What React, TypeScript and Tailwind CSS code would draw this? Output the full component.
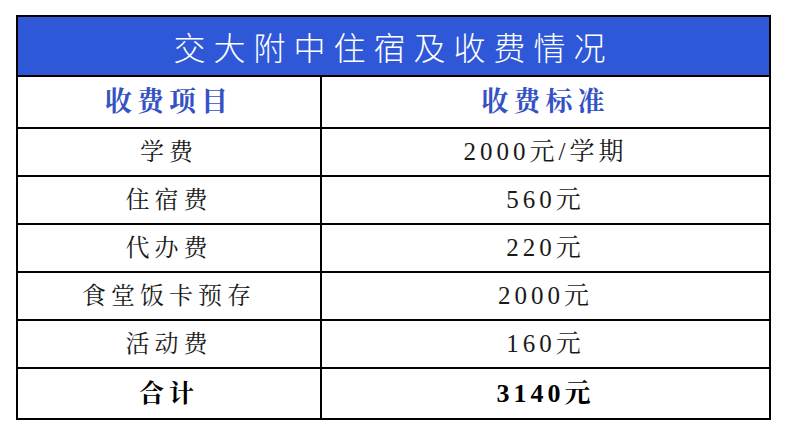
import React from 'react';

const rows: [string, string][] = [
  ['学费', '2000元/学期'],
  ['住宿费', '560元'],
  ['代办费', '220元'],
  ['食堂饭卡预存', '2000元'],
  ['活动费', '160元'],
];

const font = { fontFamily: '"Liberation Serif", "Noto Serif CJK SC", "Noto Sans CJK SC", serif' };

export default function App() {
  return (
    <div className="w-[786px] h-[436px] bg-white pt-[15px] pl-[16px]" style={font}>
      <table className="w-[755px] border-collapse border-2 border-black text-black">
        <tbody>
          <tr className="h-[60px]">
            <td
              colSpan={2}
              className="bg-[#2f58d8] text-white text-center text-[32px] tracking-[8px] border-2 border-black"
              style={{ fontFamily: '"Noto Sans CJK SC", sans-serif', fontWeight: 300 }}
            >
              交大附中住宿及收费情况
            </td>
          </tr>
          <tr className="h-[52px]">
            <td className="w-[304px] border-2 border-black text-center text-[27px] tracking-[5px] font-bold text-[#3452c4]">
              收费项目
            </td>
            <td className="border-2 border-black text-center text-[27px] tracking-[5px] font-bold text-[#3452c4]">
              收费标准
            </td>
          </tr>
          {rows.map(([name, price]) => (
            <tr key={name} className="h-[48px]">
              <td className="border-2 border-black text-center text-[24px] tracking-[5px] text-[#1a1a1a]">{name}</td>
              <td className="border-2 border-black text-center text-[25px] tracking-[4px] text-[#1a1a1a]">{price}</td>
            </tr>
          ))}
          <tr className="h-[51px]">
            <td className="border-2 border-black text-center text-[25px] tracking-[5px] font-bold">合计</td>
            <td className="border-2 border-black text-center text-[26px] tracking-[4px] font-bold">3140元</td>
          </tr>
        </tbody>
      </table>
    </div>
  );
}
